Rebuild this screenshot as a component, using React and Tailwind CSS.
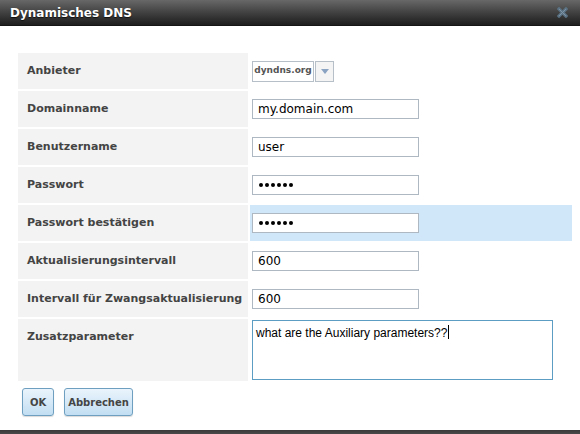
import React from "react";

const verdana = { fontFamily: '"DejaVu Sans", Verdana, sans-serif' };

function Label({ children, tall }) {
  return (
    <div
      className={`bg-[#f3f3f3] pl-[9px] pt-[11px] text-[11px] font-bold leading-[14px] text-[#444] ${tall ? "h-[62px]" : "h-[36px]"}`}
    >
      {children}
    </div>
  );
}

function TextBox({ value }) {
  return (
    <div className="flex h-[20px] w-[167px] items-center border border-[#aeb8c2] bg-white pl-[5px] text-[12px] text-black">
      {value}
    </div>
  );
}

function PasswordBox() {
  return (
    <div className="flex h-[20px] w-[167px] items-center gap-[2px] border border-[#aeb8c2] bg-white pl-[6px]">
      {[0, 1, 2, 3, 4, 5].map((i) => (
        <span key={i} className="h-[4px] w-[4px] rounded-full bg-black" />
      ))}
    </div>
  );
}

function Row({ label, children, highlight, tall, top }) {
  return (
    <>
      <Label tall={tall}>{label}</Label>
      <div
        className={`flex pl-[2px] ${top ? "items-start pt-[1px]" : "items-center"} ${highlight ? "bg-[#cfe7f9]" : "bg-white"}`}
      >
        {children}
      </div>
    </>
  );
}

export default function App() {
  return (
    <div className="relative h-[434px] w-[580px] overflow-hidden bg-white" style={verdana}>
      {/* title bar */}
      <div className="flex h-[26px] items-center justify-between border-b border-[#151515] bg-linear-to-b from-[#686868] to-[#1e1e1e] pl-[10px] pr-[12px]">
        <span className="text-[12px] font-bold text-white [text-shadow:0_1px_1px_rgba(0,0,0,0.7)]">
          Dynamisches DNS
        </span>
        <svg width="11" height="11" viewBox="0 0 11 11">
          <path d="M2 2 L9 9 M9 2 L2 9" stroke="#5a7283" strokeWidth="3.2" strokeLinecap="square" />
          <path d="M2.5 2.5 L8.5 8.5 M8.5 2.5 L2.5 8.5" stroke="#7f95a5" strokeWidth="1" strokeLinecap="square" />
        </svg>
      </div>

      {/* settings table */}
      <div className="ml-[18px] mt-[27px] grid w-[554px] grid-cols-[230px_322px] gap-[2px]">
        <Row label="Anbieter">
          <div className="flex h-[21px]">
            <div className="flex w-[62px] items-center justify-center border border-[#b6bfc8] bg-white text-[9px] font-bold text-[#555]">
              dyndns.org
            </div>
            <div className="ml-[1px] flex w-[19px] items-center justify-center border border-[#b6bfc8] bg-[#f4f4f4]">
              <svg width="8" height="5" viewBox="0 0 8 5">
                <path d="M0 0 L8 0 L4 5 Z" fill="#8aa3c2" />
              </svg>
            </div>
          </div>
        </Row>
        <Row label="Domainname">
          <TextBox value="my.domain.com" />
        </Row>
        <Row label="Benutzername">
          <TextBox value="user" />
        </Row>
        <Row label="Passwort">
          <PasswordBox />
        </Row>
        <Row label="Passwort bestätigen" highlight>
          <PasswordBox />
        </Row>
        <Row label="Aktualisierungsintervall">
          <TextBox value="600" />
        </Row>
        <Row label="Intervall für Zwangsaktualisierung">
          <TextBox value="600" />
        </Row>
        <Row label="Zusatzparameter" tall top>
          <div
            className="h-[60px] w-[301px] border border-[#5b9dc3] bg-white pl-[3px] pt-[2px] text-[12px] leading-[15px] text-black"
            style={{ fontFamily: '"Liberation Sans", Arial, sans-serif' }}
          >
            what are the Auxiliary parameters??
            <span className="ml-[1px] inline-block h-[14px] w-[1px] translate-y-[2px] bg-black" />
          </div>
        </Row>
      </div>

      {/* buttons */}
      <div className="ml-[22px] mt-[7px] flex gap-[10px]">
        <button className="h-[28px] w-[32px] rounded-[3px] border border-[#6e9fc0] bg-linear-to-b from-[#eaf4fc] to-[#c2def2] text-[10px] font-bold text-[#444] shadow-[0_1px_1px_rgba(0,0,0,0.15)]">
          OK
        </button>
        <button className="h-[28px] w-[69px] rounded-[3px] border border-[#6e9fc0] bg-linear-to-b from-[#eaf4fc] to-[#c2def2] text-[10px] font-bold text-[#444] shadow-[0_1px_1px_rgba(0,0,0,0.15)]">
          Abbrechen
        </button>
      </div>

      {/* bottom edge */}
      <div className="absolute bottom-0 left-0 h-[4px] w-full bg-linear-to-b from-[#3a3a3a] to-[#4a4a4a]" />
    </div>
  );
}
